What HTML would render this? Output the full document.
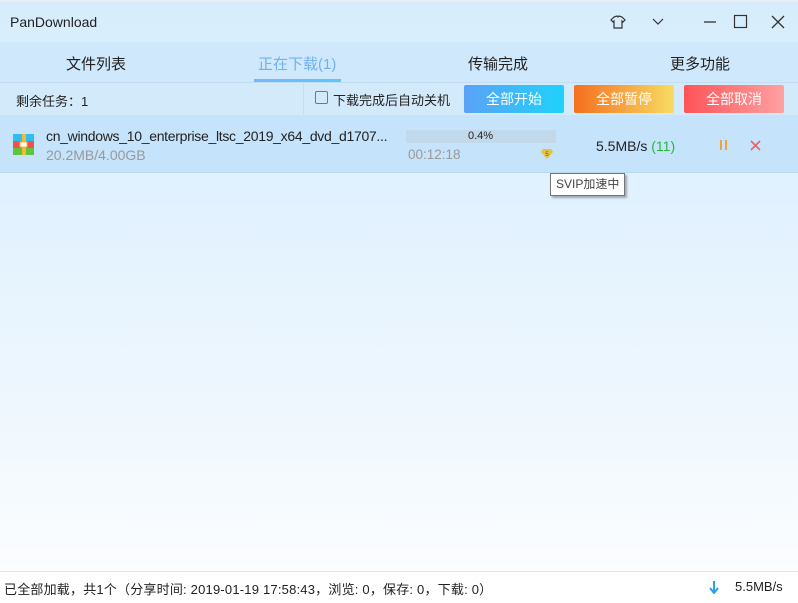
<!DOCTYPE html>
<html><head><meta charset="utf-8"><style>
*{margin:0;padding:0;box-sizing:border-box}
body{width:798px;height:603px;overflow:hidden;font-family:"Liberation Sans","Noto Sans CJK SC",sans-serif;font-size:13px;color:#222;position:relative;background:linear-gradient(#d7edfc 0px,#dcefff 120px,#eef7fe 400px,#fbfdff 570px)}
.a{position:absolute}
.btn{position:absolute;top:85px;height:28px;width:100px;color:#fff;font-size:14px;text-align:center;line-height:28px;border-radius:2px}
</style></head><body>
<div class="a" style="left:0;top:0;width:798px;height:2px;background:#e8eef3"></div>
<div class="a" style="left:10px;top:14px;font-size:14px">PanDownload</div>
<svg class="a" style="left:610px;top:14px" width="180" height="16" viewBox="0 0 180 16">
<path d="M7 2 L4 3 L1 6 L3 8 L4 7 L4 14 L12 14 L12 7 L13 8 L15 6 L12 3 L9 2 Q8 4 7 2Z" fill="none" stroke="#333" stroke-width="1.2"/>
<path d="M43 5 L48 10 L53 5" fill="none" stroke="#333" stroke-width="1.2"/>
<path d="M94 8 H106" stroke="#333" stroke-width="1.3"/>
<rect x="124.5" y="1.5" width="12" height="12" fill="none" stroke="#333" stroke-width="1.2"/>
<path d="M162 2 L174 14 M174 2 L162 14" stroke="#333" stroke-width="1.3"/>
</svg>
<div class="a" style="left:0;top:42px;width:798px;height:40px;background:#cfe8fb"></div>
<div class="a" style="left:66px;top:53px;font-size:15px">文件列表</div>
<div class="a" style="left:258px;top:53px;font-size:15px;color:#6fb2f0">正在下载(1)</div>
<div class="a" style="left:254px;top:79px;width:87px;height:3px;background:linear-gradient(90deg,#7ab6f7,#56cbf5)"></div>
<div class="a" style="left:468px;top:53px;font-size:15px">传输完成</div>
<div class="a" style="left:670px;top:53px;font-size:15px">更多功能</div>
<div class="a" style="left:0;top:82px;width:798px;height:1px;background:#c3def2"></div>
<div class="a" style="left:0;top:83px;width:798px;height:32px;background:#d3eafb"></div>
<div class="a" style="left:303px;top:83px;width:1px;height:32px;background:#c3def2"></div>
<div class="a" style="left:16px;top:91px">剩余任务：1</div>
<div class="a" style="left:315px;top:91px;width:13px;height:13px;border:1.5px solid #777;border-radius:2px"></div>
<div class="a" style="left:333px;top:90px">下载完成后自动关机</div>
<div class="btn" style="left:464px;background:linear-gradient(90deg,#5aa2f7,#1fd2fa)">全部开始</div>
<div class="btn" style="left:574px;background:linear-gradient(90deg,#f56f1f,#f7dc62)">全部暂停</div>
<div class="btn" style="left:684px;background:linear-gradient(90deg,#fe5458,#fea1a2)">全部取消</div>
<div class="a" style="left:0;top:115px;width:798px;height:58px;background:#c5e3fb;border-bottom:1px solid #b6d8f3"></div>
<svg class="a" style="left:13px;top:134px" width="21" height="21" viewBox="0 0 21 21">
<rect x="0" y="0" width="21" height="7" fill="#2dbdf0"/><rect x="0" y="7" width="21" height="7" fill="#f05050"/><rect x="0" y="14" width="21" height="7" fill="#5ec43c"/>
<rect x="9" y="0" width="4" height="21" fill="#f6b83a"/><rect x="7" y="8" width="7" height="5" fill="#fff" stroke="#f6b83a"/></svg>
<div class="a" style="left:46px;top:128px;font-size:14px;letter-spacing:-0.3px">cn_windows_10_enterprise_ltsc_2019_x64_dvd_d1707...</div>
<div class="a" style="left:46px;top:147px;font-size:14px;color:#999">20.2MB/4.00GB</div>
<div class="a" style="left:406px;top:130px;width:150px;height:13px;background:#c2d9ec"></div>
<div class="a" style="left:468px;top:130px;font-size:11px">0.4%</div>
<div class="a" style="left:408px;top:147px;font-size:13.5px;color:#999">00:12:18</div>
<svg class="a" style="left:541px;top:149px" width="12" height="10" viewBox="0 0 12 10"><path d="M2 0 H10 L12 3 L6 10 L0 3Z" fill="#e8c23a"/><text x="6" y="7" font-size="6" text-anchor="middle" fill="#654">5</text></svg>
<div class="a" style="left:596px;top:138px;font-size:14px">5.5MB/s <span style="color:#2ab83a">(11)</span></div>
<div class="a" style="left:720px;top:140px;width:2px;height:10px;background:#f3a23a"></div>
<div class="a" style="left:725px;top:140px;width:2px;height:10px;background:#f3a23a"></div>
<svg class="a" style="left:750px;top:140px" width="11" height="11"><path d="M1 1L10 10M10 1L1 10" stroke="#f06262" stroke-width="1.6"/></svg>
<div class="a" style="left:550px;top:173px;width:75px;height:23px;background:#fff;border:1px solid #767676;box-shadow:2px 2px 2px rgba(0,0,0,.3);font-size:12px;line-height:21px;padding-left:5px;color:#444">SVIP加速中</div>
<div class="a" style="left:0;top:571px;width:798px;height:32px;background:#fff;border-top:1px solid #e4e4e4"></div>
<div class="a" style="left:4px;top:579px;font-size:13px;letter-spacing:0.2px">已全部加载，共1个（分享时间: 2019-01-19 17:58:43，浏览: 0，保存: 0，下载: 0）</div>
<svg class="a" style="left:709px;top:581px" width="10" height="13"><path d="M5 0V11M1 7L5 12L9 7" stroke="#2a9ff0" stroke-width="2" fill="none"/></svg>
<div class="a" style="left:735px;top:579px;font-size:13px">5.5MB/s</div>
</body></html>
